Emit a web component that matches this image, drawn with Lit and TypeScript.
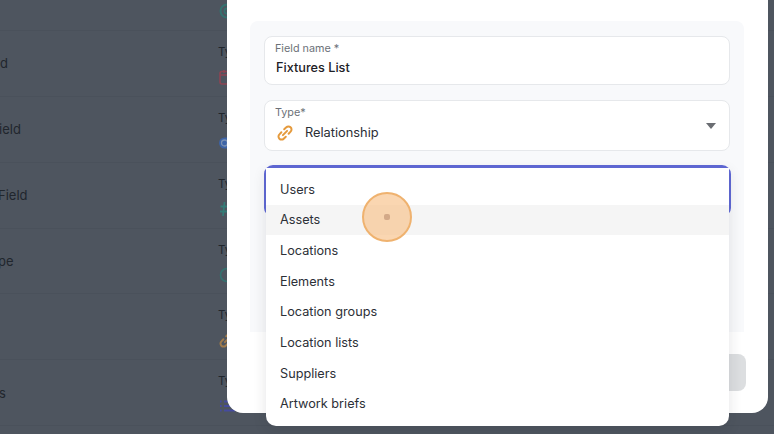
import { LitElement, html, css, svg } from "lit";
import { customElement } from "lit/decorators.js";

const linkIcon = (color: string) =>
  svg`<path d="M7.200 4.300 9.300 2.300a3 3 0 0 1 4.300 0 3 3 0 0 1 0 4.300L11.600 8.700M8.800 11.700l-2.100 2a3 3 0 0 1-4.300 0 3 3 0 0 1 0-4.300l2-2.100M5.900 10.100l4.200-4.200" stroke="${color}" stroke-width="2" fill="none" stroke-linecap="round"/>`;

const icons = [
  svg`<circle cx="8" cy="8" r="6.500" fill="none" stroke="#1f8a7d" stroke-width="2"/><circle cx="8" cy="8" r="2.600" fill="none" stroke="#1f8a7d" stroke-width="1.600"/>`,
  svg`<rect x="1" y="2.500" width="13" height="12.500" rx="2" fill="none" stroke="#c0394b" stroke-width="1.600"/><path d="M1 6h13M5 1v3M10 1v3" stroke="#c0394b" stroke-width="1.600" fill="none"/>`,
  svg`<rect x="0" y="2.500" width="16" height="11" rx="5.500" fill="#2f6fe0"/><circle cx="5.500" cy="8" r="3" fill="none" stroke="#9dc0f5" stroke-width="1.300"/>`,
  svg`<path d="M5.500 1 4 15M11.500 1 10 15M1.500 5.500h13M1 10.500h13" stroke="#1f9a8a" stroke-width="1.800" fill="none"/>`,
  svg`<circle cx="8" cy="8" r="6.500" fill="none" stroke="#1f8a7d" stroke-width="1.600"/>`,
  linkIcon("#e59a3c"),
  svg`<path d="M5 3.500h11M5 8h11M5 12.500h11M1 3.500h1.600M1 8h1.600M1 12.500h1.600" stroke="#3f44d4" stroke-width="2.200" fill="none"/>`,
];

const rows: { label: string; shift: number; icon: number }[] = [
  { label: "", shift: 0, icon: 0 },
  { label: "d", shift: 0, icon: 1 },
  { label: "ield", shift: -1, icon: 2 },
  { label: "Field", shift: -2, icon: 3 },
  { label: "pe", shift: -2, icon: 4 },
  { label: "", shift: 0, icon: 5 },
  { label: "s", shift: -1, icon: 6 },
];

const options = [
  "Users",
  "Assets",
  "Locations",
  "Elements",
  "Location groups",
  "Location lists",
  "Suppliers",
  "Artwork briefs",
];

@customElement("app-root")
export class AppRoot extends LitElement {
  static styles = css`
    :host {
      display: block;
      position: relative;
      width: 774px;
      height: 434px;
      overflow: hidden;
      background: #4e555f;
      font-family: Inter, "Liberation Sans", sans-serif;
      color: #23272e;
    }
    .list {
      display: flex;
      flex-direction: column;
      margin-top: -35px;
    }
    .row {
      box-sizing: border-box;
      height: 65.900px;
      display: grid;
      grid-template-columns: 218px 1fr;
      align-items: center;
      border-bottom: 1px solid #4a515b;
      font-size: 13px;
      font-weight: 400;
      color: #21262d;
    }
    .name {
      white-space: nowrap;
    }
    .type {
      display: flex;
      flex-direction: column;
      gap: 10px;
      padding-top: 3px;
      font-size: 11.500px;
      line-height: 14px;
      color: #21262d;
      font-weight: 400;
    }
    .type svg {
      width: 16px;
      height: 16px;
      margin-left: 1px;
      display: block;
      opacity: 0.55;
    }
    .modal {
      position: absolute;
      left: 227px;
      top: -20px;
      box-sizing: border-box;
      width: 541px;
      height: 433px;
      padding: 41px 24px 0 23px;
      background: #fff;
      border-radius: 16px;
      display: flex;
      flex-direction: column;
    }
    .panel {
      box-sizing: border-box;
      height: 311px;
      flex: none;
      padding: 15px 14px;
      background: #f8f9fb;
      border-radius: 8px 8px 0 0;
      display: flex;
      flex-direction: column;
      gap: 15px;
    }
    .field {
      box-sizing: border-box;
      background: #fff;
      border: 1px solid #e6e8eb;
      border-radius: 8px;
      padding: 5px 10px;
      display: flex;
      flex-direction: column;
      position: relative;
      flex: none;
    }
    .f1 {
      height: 49px;
    }
    .f2 {
      height: 51px;
    }
    .lbl {
      font-size: 10.800px;
      line-height: 14px;
      color: #6c7178;
    }
    .val {
      font-size: 12.700px;
      line-height: 18px;
      font-weight: 500;
      color: #1d2026;
      margin: 3px 0 0 1px;
    }
    .with-icon {
      display: flex;
      align-items: center;
      gap: 12.500px;
      margin: 4px 0 0 1.500px;
      font-size: 12.800px;
      line-height: 18px;
      color: #2a2e35;
    }
    .with-icon svg {
      width: 16px;
      height: 16px;
      flex: none;
    }
    .caret {
      position: absolute;
      right: 13px;
      top: 22px;
      width: 0;
      height: 0;
      border-left: 5.500px solid transparent;
      border-right: 5.500px solid transparent;
      border-top: 6px solid #6a6d72;
    }
    .focus {
      position: relative;
      box-sizing: border-box;
      flex: none;
      height: 52px;
      margin: -1px -1px 0 0;
      border: 3px solid #6069d6;
      border-radius: 9px;
      background: #fff;
    }
    .menu {
      position: absolute;
      left: -1px;
      right: -1px;
      top: 0;
      height: 258px;
      background: #fff;
      border-radius: 0 0 10px 10px;
      box-shadow: 0 4px 14px rgba(30, 35, 45, 0.12);
      padding-top: 6px;
      box-sizing: border-box;
      display: flex;
      flex-direction: column;
      z-index: 2;
    }
    .opt {
      box-sizing: border-box;
      height: 30.650px;
      flex: none;
      display: flex;
      align-items: center;
      padding-left: 14px;
      font-size: 12.700px;
      color: #2c3037;
    }
    .opt.on {
      background: #f5f5f5;
    }
    .foot {
      display: flex;
      justify-content: flex-end;
      margin: 22px -2px 0 0;
    }
    .btn {
      width: 120px;
      height: 37px;
      border-radius: 8px;
      background: #dcdee0;
    }
    .click {
      position: absolute;
      left: 362px;
      top: 192px;
      box-sizing: border-box;
      width: 50px;
      height: 50px;
      border-radius: 50%;
      background: rgba(248, 192, 135, 0.65);
      border: 2px solid #efb26f;
      display: flex;
      align-items: center;
      justify-content: center;
      z-index: 3;
    }
    .dot {
      width: 6px;
      height: 6px;
      border-radius: 2px;
      background: #d3a988;
    }
  `;

  render() {
    return html`
      <div class="list">
        ${rows.map(
          (r) => html`<div class="row">
            <div class="name" style="margin-left:${r.shift}px">${r.label}</div>
            <div class="type">
              <span>Type</span>
              <svg viewBox="0 0 16 16">${icons[r.icon]}</svg>
            </div>
          </div>`
        )}
      </div>
      <div class="modal">
        <div class="panel">
          <div class="field f1">
            <span class="lbl">Field name *</span>
            <span class="val">Fixtures List</span>
          </div>
          <div class="field f2">
            <span class="lbl">Type*</span>
            <span class="with-icon">
              <svg viewBox="0 0 16 16">${icons[5]}</svg>
              Relationship
            </span>
            <span class="caret"></span>
          </div>
          <div class="focus">
            <div class="menu">
              ${options.map(
                (o, i) =>
                  html`<div class="opt ${i === 1 ? "on" : ""}">${o}</div>`
              )}
            </div>
          </div>
        </div>
        <div class="foot"><div class="btn"></div></div>
      </div>
      <div class="click"><div class="dot"></div></div>
    `;
  }
}
